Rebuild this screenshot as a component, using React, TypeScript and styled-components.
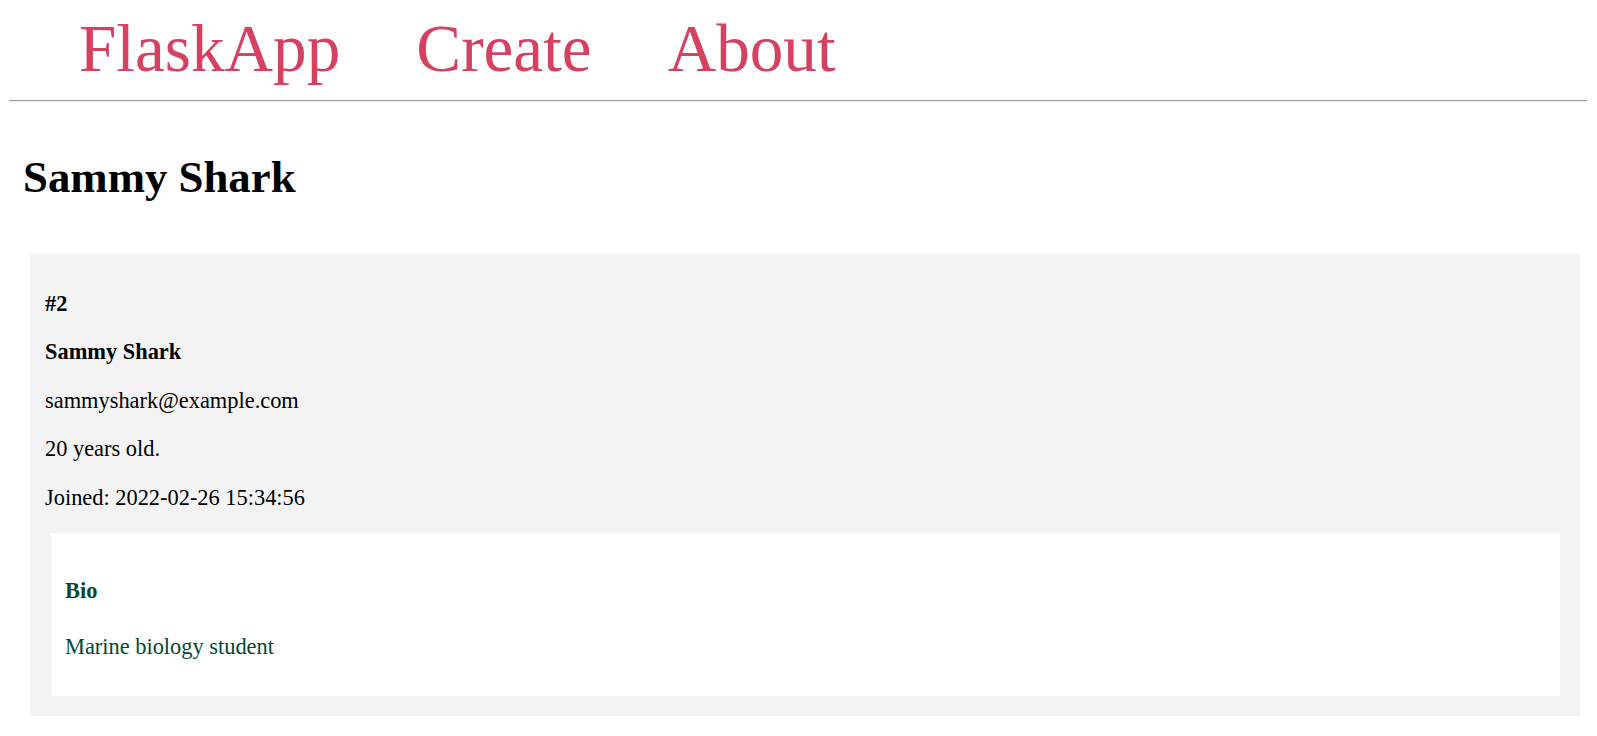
import React from 'react';
import styled, { createGlobalStyle } from 'styled-components';

const GlobalStyle = createGlobalStyle`
  body {
    margin: 0;
    color: #000000;
    font-size: 22.4px;
    font-family: "Liberation Serif", "Times New Roman", serif;
    background-color: #ffffff;
  }
`;

interface IEmployee {
  id: number;
  name: string;
  email: string;
  age: number;
  joined: string;
  bio: string;
}

const employee: IEmployee = {
  id: 2,
  name: 'Sammy Shark',
  email: 'sammyshark@example.com',
  age: 20,
  joined: '2022-02-26 15:34:56',
  bio: 'Marine biology student',
};

const navItems = ['FlaskApp', 'Create', 'About'];

export const App: React.FC = () => (
  <SPage>
    <GlobalStyle />
    <SNav>
      {navItems.map((item) => (
        <SNavLink key={`nav-${item}`} href="#">{item}</SNavLink>
      ))}
    </SNav>
    <SDivider />
    <STitle>{employee.name}</STitle>
    <SCard>
      <SText><b>#{employee.id}</b></SText>
      <SText bold>{employee.name}</SText>
      <SText>{employee.email}</SText>
      <SText>{employee.age} years old.</SText>
      <SText>Joined: {employee.joined}</SText>
      <SBio>
        <SBioTitle>Bio</SBioTitle>
        <SText>{employee.bio}</SText>
      </SBio>
    </SCard>
  </SPage>
);

export default App;

const SPage = styled.div`
  padding: 10px 10px 0 9px;
`;

const SNav = styled.nav`
  font-size: 67.2px;
  line-height: normal;
`;

const SNavLink = styled.a`
  color: #d64161;
  margin-left: 76px;
  text-decoration: none;

  &:first-child {
    margin-left: 70px;
  }
`;

const SDivider = styled.hr`
  margin: 12px 0 0;
  border: 0;
  border-top: 1px solid #9a9a9a;
  border-bottom: 1px solid #eeeeee;
`;

const STitle = styled.h1`
  margin: 48.6px 0 0 14px;
  font-size: 44.8px;
  font-weight: bold;
  line-height: normal;
`;

const SCard = styled.div`
  margin: 51px 7px 0 21px;
  padding: 15px;
  background-color: #f3f3f3;
`;

interface ISText {
  bold?: boolean;
}

const SText = styled.p<ISText>`
  margin: 22.4px 0;
  font-weight: ${(props) => (props.bold ? 'bold' : 'normal')};
  line-height: normal;
`;

const SBio = styled.div`
  margin: 5px 5px 5px 6px;
  padding: 15px 15px 14px 14px;
  color: #004835;
  background-color: #ffffff;
`;

const SBioTitle = styled.h4`
  margin: 29.8px 0;
  font-size: 22.4px;
  font-weight: bold;
  line-height: normal;
`;
